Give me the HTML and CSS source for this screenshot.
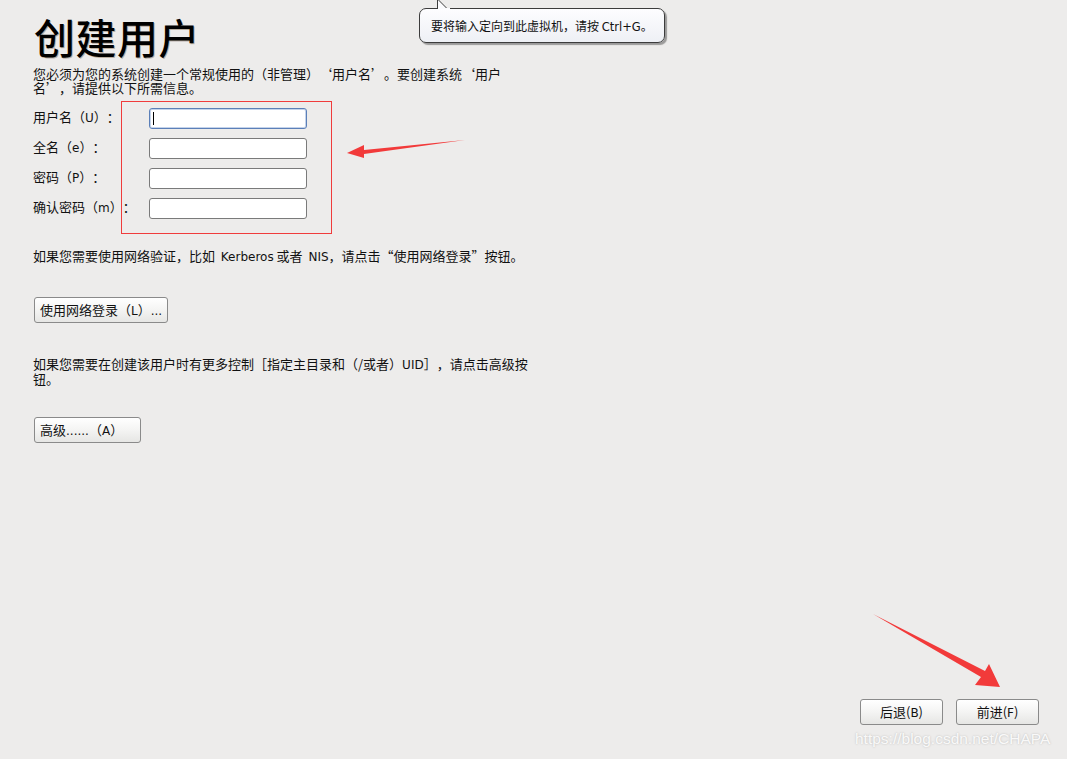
FILE: index.html
```html
<!DOCTYPE html>
<html lang="zh-CN">
<head>
<meta charset="utf-8">
<title>创建用户</title>
<link rel="stylesheet" href="styles.css">
</head>
<body>
<div class="page">
  <h1 class="title">创建用户</h1>
  <p class="intro">您必须为您的系统创建一个常规使用的（非管理）‘用户名’。要创建系统‘用户名’，请提供以下所需信息。</p>

  <div class="form-wrap">
    <div class="form">
      <label class="lbl">用户名（<span class="lat">U</span>）：</label>
      <div class="input focus"><span class="caret"></span></div>
      <label class="lbl">全名（<span class="lat">e</span>）：</label>
      <div class="input"></div>
      <label class="lbl">密码（<span class="lat">P</span>）：</label>
      <div class="input"></div>
      <label class="lbl">确认密码（<span class="lat">m</span>）：</label>
      <div class="input"></div>
    </div>
    <div class="mark-box"></div>
  </div>

  <p class="note note-net">如果您需要使用网络验证，比如&nbsp;&nbsp;<span class="lat">Kerberos</span> 或者&nbsp;&nbsp;<span class="lat">NIS</span>，请点击“使用网络登录”按钮。</p>
  <div class="btn-row"><button class="btn btn-net">使用网络登录（<span class="lat">L</span>）<span class="lat">...</span></button></div>

  <p class="note note-adv">如果您需要在创建该用户时有更多控制［指定主目录和（/或者）<span class="lat">UID</span>］，请点击高级按钮。</p>
  <div class="btn-row"><button class="btn btn-adv">高级<span class="lat">......</span>（<span class="lat">A</span>）</button></div>

  <div class="footer">
    <button class="btn btn-nav">后退(<span class="lat">B</span>)</button>
    <button class="btn btn-nav">前进(<span class="lat">F</span>)</button>
  </div>
</div>

<div class="tooltip">
  <svg class="tip-tail" width="16" height="10" viewBox="0 0 16 10"><path d="M0.5 10 L0.5 0 L10 9.5" fill="#fbfbfd" stroke="#3c3c3c" stroke-width="1"/><rect x="1" y="9" width="12" height="2" fill="#fbfbfd"/></svg>
  要将输入定向到此虚拟机，请按 <span class="lat">Ctrl+G</span>。
</div>

<svg class="arrow arrow-1" width="130" height="30" viewBox="0 0 130 30">
  <path d="M119 5 L18 15 L18 10 L1 18 L18 23 L18 19 Z" fill="#f23a3a"/>
</svg>
<svg class="arrow arrow-2" width="140" height="85" viewBox="0 0 140 85">
  <path d="M2 2 L114 59 L118 52 L129 75 L104 73 L110 65 Z" fill="#f23a3a"/>
</svg>

<div class="watermark">https://blog.csdn.net/CHAPA</div>
</body>
</html>
```
FILE: styles.css
```css
html, body {
  margin: 0;
  padding: 0;
}
body {
  background: #edeceb;
  font-family: "Noto Sans CJK SC", "DejaVu Sans", sans-serif;
  color: #111;
  font-size: 13px;
  overflow: hidden;
  text-spacing-trim: space-all;
}
.lat {
  font-family: "DejaVu Sans", sans-serif;
  font-size: 12px;
  line-height: 0;
}
.page {
  box-sizing: border-box;
  min-height: 759px;
  display: flex;
  flex-direction: column;
  padding: 11px 28px 34px 33px;
}
.title {
  margin: 0 0 0 1px;
  font-size: 41px;
  line-height: 50px;
  font-weight: 500;
  color: #000;
  letter-spacing: 0.5px;
  text-shadow: 1px 1px 0 rgba(90, 60, 20, 0.35);
}
.intro {
  margin: 6px 0 0 0;
  width: 485px;
  line-height: 14px;
}
.form-wrap {
  position: relative;
  margin-top: 13px;
  width: 300px;
}
.form {
  display: grid;
  grid-template-columns: 116px 158px;
  grid-auto-rows: 21px;
  row-gap: 9px;
  align-items: center;
}
.lbl {
  line-height: 18px;
  height: 21px;
  white-space: nowrap;
}
.input {
  box-sizing: border-box;
  height: 21px;
  background: #fff;
  border: 1px solid #7a7a7a;
  border-radius: 3px;
  position: relative;
}
.input.focus {
  border-color: #5b7fb8;
  box-shadow: inset 0 0 0 1px #c4d3ea;
}
.caret {
  position: absolute;
  left: 3px;
  top: 3px;
  width: 1px;
  height: 13px;
  background: #000;
}
.mark-box {
  position: absolute;
  left: 88px;
  top: -7px;
  width: 209px;
  height: 131px;
  border: 1px solid #f03c3c;
  pointer-events: none;
}
.note {
  margin: 0;
  line-height: 15px;
}
.note-net {
  margin-top: 29px;
}
.note-adv {
  margin-top: 33px;
  width: 505px;
}
.btn-row {
  display: flex;
}
.btn {
  font-family: "Noto Sans CJK SC", "DejaVu Sans", sans-serif;
  font-size: 13px;
  color: #111;
  height: 26px;
  padding: 0 5px;
  border: 1px solid #8a8a8a;
  border-radius: 3px;
  background: linear-gradient(#ffffff, #f4f4f3 50%, #e6e6e4);
  line-height: 22px;
  white-space: nowrap;
  text-spacing-trim: space-all;
}
.btn-net {
  margin-top: 34px;
  margin-left: 1px;
  width: 134px;
}
.btn-adv {
  margin-top: 31px;
  margin-left: 1px;
  width: 107px;
  text-align: left;
}
.footer {
  margin-top: auto;
  display: flex;
  justify-content: flex-end;
  gap: 13px;
}
.btn-nav {
  width: 83px;
}
.tooltip {
  position: absolute;
  left: 419px;
  top: 8px;
  box-sizing: border-box;
  width: 246px;
  height: 35px;
  padding: 0 0 0 11px;
  line-height: 33px;
  font-size: 12px;
  color: #111;
  background: linear-gradient(#fdfdff, #eef0f5);
  border: 1px solid #3c3c3c;
  border-radius: 7px;
  box-shadow: 2px 2px 1px rgba(0, 0, 0, 0.35);
}
.tooltip .lat {
  font-size: 11.5px;
}
.tip-tail {
  position: absolute;
  left: 17px;
  top: -10px;
}
.arrow {
  position: absolute;
}
.arrow-1 {
  left: 346px;
  top: 135px;
}
.arrow-2 {
  left: 871px;
  top: 612px;
}
.watermark {
  position: absolute;
  left: 855px;
  top: 730px;
  font-family: "Liberation Sans", Arial, sans-serif;
  font-size: 15.5px;
  color: rgba(255, 255, 255, 0.9);
  text-shadow: 0 0 2px rgba(90, 90, 90, 0.35);
  white-space: nowrap;
}
```
